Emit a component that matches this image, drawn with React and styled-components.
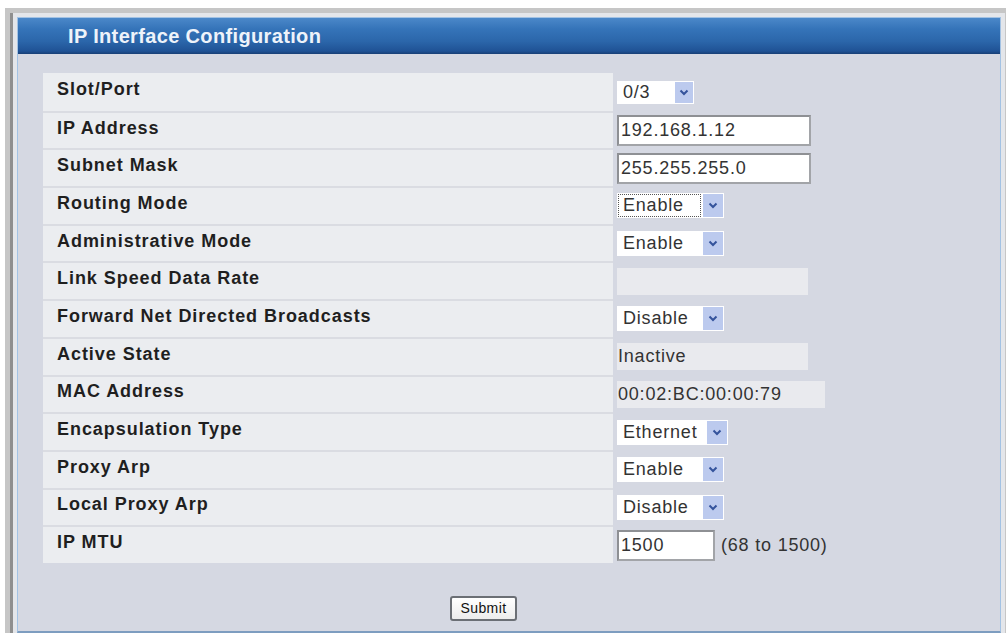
import React from "react";
import styled, { createGlobalStyle } from "styled-components";

const GlobalStyle = createGlobalStyle`
  html, body {
    margin: 0;
    padding: 0;
    background: #ffffff;
  }
  body {
    font-family: "Liberation Sans", Arial, sans-serif;
    overflow: hidden;
  }
`;

const rows = [
  { label: "Slot/Port", kind: "select", value: "0/3", width: 77, arrow: 18, height: 23 },
  { label: "IP Address", kind: "input", value: "192.168.1.12", width: 194 },
  { label: "Subnet Mask", kind: "input", value: "255.255.255.0", width: 194 },
  { label: "Routing Mode", kind: "select", value: "Enable", width: 107, focused: true },
  { label: "Administrative Mode", kind: "select", value: "Enable", width: 107 },
  { label: "Link Speed Data Rate", kind: "readonly", value: "", width: 191 },
  { label: "Forward Net Directed Broadcasts", kind: "select", value: "Disable", width: 107 },
  { label: "Active State", kind: "readonly", value: "Inactive", width: 191 },
  { label: "MAC Address", kind: "readonly", value: "00:02:BC:00:00:79", width: 208 },
  { label: "Encapsulation Type", kind: "select", value: "Ethernet", width: 111 },
  { label: "Proxy Arp", kind: "select", value: "Enable", width: 107 },
  { label: "Local Proxy Arp", kind: "select", value: "Disable", width: 107 },
  { label: "IP MTU", kind: "input", value: "1500", width: 98, suffix: "(68 to 1500)" },
];

function Chevron() {
  return (
    <svg width="10" height="7" viewBox="0 0 10 7">
      <path d="M1.5 1.5 L5 5 L8.5 1.5" fill="none" stroke="#34539c" strokeWidth="2" />
    </svg>
  );
}

function SelectBox({ value, width, arrow = 20, height = 25, focused }) {
  return (
    <Select $width={width} $height={height}>
      <SelectText $focused={focused}>{value}</SelectText>
      <Arrow $width={arrow}>
        <Chevron />
      </Arrow>
    </Select>
  );
}

function ValueControl({ row }) {
  if (row.kind === "select") {
    return (
      <SelectBox
        value={row.value}
        width={row.width}
        arrow={row.arrow}
        height={row.height}
        focused={row.focused}
      />
    );
  }
  if (row.kind === "input") {
    return (
      <>
        <TextInput $width={row.width}>{row.value}</TextInput>
        {row.suffix && <Suffix>{row.suffix}</Suffix>}
      </>
    );
  }
  return <ReadOnly $width={row.width}>{row.value}</ReadOnly>;
}

export default function App() {
  return (
    <>
      <GlobalStyle />
      <Frame>
        <Panel>
          <Header>IP Interface Configuration</Header>
          <Body>
            <Table>
              {rows.map((row, i) => (
                <Row key={row.label}>
                  <LabelCell $first={i === 0}>{row.label}</LabelCell>
                  <ValueCell>
                    <ValueControl row={row} />
                  </ValueCell>
                </Row>
              ))}
            </Table>
            <Actions>
              <SubmitButton>Submit</SubmitButton>
            </Actions>
          </Body>
        </Panel>
      </Frame>
    </>
  );
}

const Frame = styled.div`
  margin: 8px 0 0 5px;
  width: 984px;
  border-style: solid;
  border-color: #c6c6c6;
  border-width: 5px 7px 0 5px;
  box-shadow: inset 3px 0 0 #8f8f8f;
  padding: 4px 4px 0 7px;
  background: #e4e6ea;
`;

const Panel = styled.div`
  border: 1px solid #a3c2e3;
  border-bottom: 2px solid #7d9dc0;
  background: #d5d8e2;
`;

const Header = styled.div`
  height: 36px;
  box-sizing: border-box;
  padding-left: 50px;
  display: flex;
  align-items: center;
  background: linear-gradient(
    to bottom,
    #4b88c9 0%,
    #3574b9 30%,
    #2b66aa 65%,
    #1f5295 92%,
    #183f75 100%
  );
  color: #eef3fa;
  font-weight: bold;
  font-size: 20px;
  letter-spacing: 0.35px;
`;

const Body = styled.div`
  padding: 19px 0 10px 25px;
`;

const Table = styled.div`
  width: 881px;
  display: flex;
  flex-direction: column;
`;

const Row = styled.div`
  display: flex;
  height: 37.7px;
`;

const LabelCell = styled.div`
  width: 570px;
  box-sizing: border-box;
  background: #ebedf0;
  border-top: ${(p) => (p.$first ? "none" : "2px solid #dadce2")};
  padding: 0 0 5px 14px;
  display: flex;
  align-items: center;
  font-weight: bold;
  font-size: 18px;
  letter-spacing: 0.95px;
  color: #1f1f1f;
`;

const ValueCell = styled.div`
  flex: 1;
  display: flex;
  align-items: center;
  padding: 2px 0 0 4px;
  gap: 6px;
  font-size: 18px;
  letter-spacing: 0.8px;
  color: #333333;
`;

const Select = styled.div`
  width: ${(p) => p.$width}px;
  height: ${(p) => p.$height}px;
  display: flex;
  align-items: stretch;
  background: #ffffff;
  box-sizing: border-box;
  padding: 1px;
`;

const SelectText = styled.div`
  flex: 1;
  display: flex;
  align-items: center;
  padding-left: 4px;
  box-sizing: border-box;
  border: 1px dotted ${(p) => (p.$focused ? "#555" : "transparent")};
  margin-right: 2px;
  white-space: nowrap;
`;

const Arrow = styled.div`
  width: ${(p) => p.$width}px;
  background: #bccaee;
  display: flex;
  align-items: center;
  justify-content: center;
`;

const TextInput = styled.div`
  width: ${(p) => p.$width}px;
  height: 31px;
  box-sizing: border-box;
  border: 2px solid #a2a4a8;
  border-top-color: #8e9094;
  border-left-color: #8e9094;
  background: #ffffff;
  display: flex;
  align-items: center;
  padding-left: 2px;
`;

const Suffix = styled.span`
  color: #333333;
`;

const ReadOnly = styled.div`
  width: ${(p) => p.$width}px;
  height: 27px;
  box-sizing: border-box;
  background: #e9eaee;
  display: flex;
  align-items: center;
  padding-left: 1px;
`;

const Actions = styled.div`
  width: 881px;
  display: flex;
  justify-content: center;
  margin-top: 33px;
`;

const SubmitButton = styled.button`
  width: 67px;
  height: 25px;
  border: 2px solid #6b6f75;
  border-radius: 3px;
  background: linear-gradient(to bottom, #ffffff, #ececec);
  font-family: "Liberation Sans", Arial, sans-serif;
  font-size: 14px;
  letter-spacing: 0.4px;
  color: #111111;
  padding: 0;
`;
